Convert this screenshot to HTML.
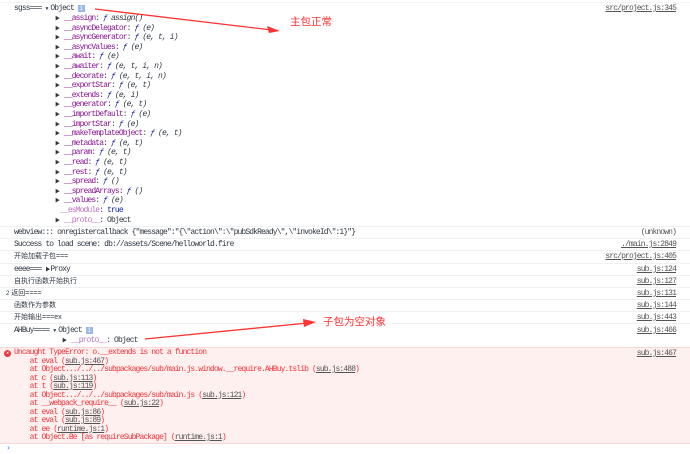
<!DOCTYPE html>
<html><head><meta charset="utf-8"><style>
body{margin:0;width:690px;height:452px;background:#fff;position:relative;overflow:hidden;font-family:"Liberation Mono","Noto Sans CJK SC",monospace;font-size:8px;letter-spacing:-0.88px;color:#303942}
.a{position:absolute;white-space:pre;line-height:10px}
.k{color:#881391}.f{color:#1a1aa6;font-style:italic}.i{font-style:italic}
.r{position:absolute;right:14px;color:#545454;text-decoration:underline;line-height:10px}
.sep{position:absolute;left:0;width:690px;height:1px;background:#eef0f2}
.cn{font-family:"Liberation Sans","Noto Sans CJK SC",sans-serif;font-size:7px;letter-spacing:0}
.tri{font-size:5px;display:inline-block;width:5px;letter-spacing:0}
.err{position:absolute;left:0;top:347px;width:690px;height:95px;background:#fff0f0;border-top:1px solid #ffd6d6;border-bottom:1px solid #ffd6d6}
.e{position:absolute;color:#f0343a;white-space:pre;line-height:8.5px}
.e u{color:#545454}
.info{display:inline-block;width:7px;height:7px;background:#9ab8e8;color:#fff;font-size:6px;line-height:7px;text-align:center;letter-spacing:0}
</style></head><body>
<div class="sep" style="top:2px;background:#f3f3f3"></div>
<div class="a" style="left:14px;top:4px">sgss=== <span class="tri">▼</span>Object <span class="info">i</span></div>
<div class="r" style="top:4px">src/project.js:345</div>
<div id="t"></div>
<div class="sep" style="top:226px"></div>
<div class="a" style="left:14px;top:228px">webview::: onregistercallback {"message":"{\"action\":\"pubSdkReady\",\"invokeId\":1}"}</div>
<div class="r" style="top:228px;text-decoration:none">(unknown)</div>
<div class="sep" style="top:238px"></div>
<div class="a" style="left:14px;top:240px">Success to load scene: db://assets/Scene/helloworld.fire</div>
<div class="r" style="top:240px">./main.js:2849</div>
<div class="sep" style="top:250px"></div>
<div class="a cn" style="left:14px;top:252px">开始加载子包===</div>
<div class="r" style="top:252px">src/project.js:405</div>
<div class="sep" style="top:263px"></div>
<div class="a" style="left:14px;top:265px">eeee=== <span class="tri">▶</span>Proxy</div>
<div class="r" style="top:265px">sub.js:124</div>
<div class="sep" style="top:275px"></div>
<div class="a cn" style="left:14px;top:277px">自执行函数开始执行</div>
<div class="r" style="top:277px">sub.js:127</div>
<div class="sep" style="top:287px"></div>
<div class="a cn" style="left:6px;top:289px"><span style="font-size:6px">2</span> 返回====</div>
<div class="r" style="top:289px">sub.js:131</div>
<div class="sep" style="top:299px"></div>
<div class="a cn" style="left:14px;top:301px">函数作为参数</div>
<div class="r" style="top:301px">sub.js:144</div>
<div class="sep" style="top:311px"></div>
<div class="a cn" style="left:14px;top:313px">开始输出===ex</div>
<div class="r" style="top:313px">sub.js:443</div>
<div class="sep" style="top:323px"></div>
<div class="a" style="left:14px;top:326px">AHBuy==== <span class="tri">▼</span>Object <span class="info">i</span></div>
<div class="a" style="left:62px;top:336px"><span class="tri">▶</span> <span class="k" style="opacity:.6">__proto__</span>: Object</div>
<div class="r" style="top:326px">sub.js:466</div>
<div class="err"></div>
<div style="position:absolute;left:4px;top:350px;width:7px;height:7px;border-radius:50%;background:#e5393e;color:#fff;font-size:6px;line-height:7px;text-align:center;letter-spacing:0">×</div>
<div class="e" style="left:14px;top:349px">Uncaught TypeError: o.__extends is not a function
    at eval (<u>sub.js:467</u>)
    at Object.../../../subpackages/sub/main.js.window.__require.AHBuy.tslib (<u>sub.js:488</u>)
    at c (<u>sub.js:113</u>)
    at t (<u>sub.js:119</u>)
    at Object.../../../subpackages/sub/main.js (<u>sub.js:121</u>)
    at __webpack_require__ (<u>sub.js:22</u>)
    at eval (<u>sub.js:86</u>)
    at eval (<u>sub.js:89</u>)
    at ee (<u>runtime.js:1</u>)
    at Object.Be [as requireSubPackage] (<u>runtime.js:1</u>)</div>
<div class="r" style="top:349px">sub.js:467</div>
<div class="a" style="left:6px;top:444px;color:#367cf1">›</div>
<svg style="position:absolute;left:0;top:0" width="690" height="452">
<line x1="95" y1="9" x2="272" y2="30" stroke="#f33" stroke-width="1.3"/>
<polygon points="280,31 267,26 269,33" fill="#f33"/>
<line x1="145" y1="339" x2="308" y2="323" stroke="#f33" stroke-width="1.3"/>
<polygon points="316,322 303,319 304,327" fill="#f33"/>
</svg>
<div class="a cn" style="left:290px;top:16px;color:#ff3333;font-size:10.5px;line-height:12px">主包正常</div>
<div class="a cn" style="left:323px;top:316px;color:#ff3333;font-size:10.5px;line-height:12px">子包为空对象</div>
<script>
var d=[["__assign","assign()"],["__asyncDelegator","(e)"],["__asyncGenerator","(e, t, i)"],["__asyncValues","(e)"],["__await","(e)"],["__awaiter","(e, t, i, n)"],["__decorate","(e, t, i, n)"],["__exportStar","(e, t)"],["__extends","(e, i)"],["__generator","(e, t)"],["__importDefault","(e)"],["__importStar","(e)"],["__makeTemplateObject","(e, t)"],["__metadata","(e, t)"],["__param","(e, t)"],["__read","(e, t)"],["__rest","(e, t)"],["__spread","()"],["__spreadArrays","()"],["__values","(e)"]];
var h="";d.forEach(function(x,n){h+='<div class="a" style="left:55px;top:'+(14+n*9.6)+'px"><span class="tri">▶</span> <span class="k">'+x[0]+'</span>: <span class="f">ƒ</span> <span class="i">'+x[1]+'</span></div>';});
h+='<div class="a" style="left:60px;top:'+(14+20*9.6)+'px"><span class="k" style="opacity:.6">__esModule</span>: <span style="color:#0d22aa">true</span></div>';
h+='<div class="a" style="left:55px;top:'+(14+21*9.6)+'px"><span class="tri">▶</span> <span class="k" style="opacity:.6">__proto__</span>: Object</div>';
document.getElementById("t").innerHTML=h;
</script>
</body></html>
